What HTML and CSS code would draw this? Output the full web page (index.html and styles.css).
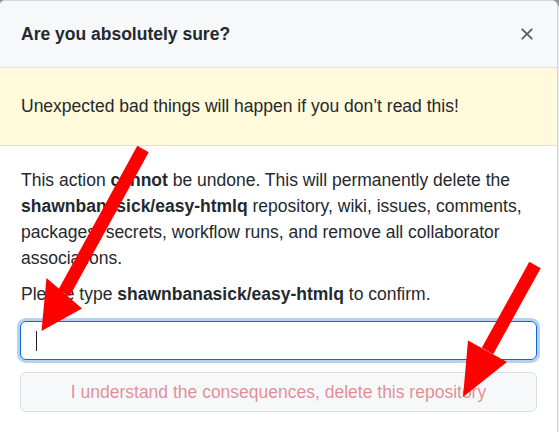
FILE: index.html
```html
<!DOCTYPE html>
<html lang="en">
<head>
<meta charset="utf-8">
<title>Delete repository</title>
<link rel="stylesheet" href="styles.css">
</head>
<body>
<div class="dialog">
  <div class="header">
    <h1 class="title">Are you absolutely sure?</h1>
    <button class="close" aria-label="Close">
      <svg width="20" height="20" viewBox="0 0 16 16"><path fill="#57606a" d="M3.72 3.72a.75.75 0 0 1 1.06 0L8 6.940l3.22-3.220a.749.749 0 0 1 1.275.326.749.749 0 0 1-.215.734L9.06 8l3.22 3.22a.749.749 0 0 1-.326 1.275.749.749 0 0 1-.734-.215L8 9.06l-3.22 3.22a.751.751 0 0 1-1.042-.018.751.751 0 0 1-.018-1.042L6.94 8 3.72 4.78a.75.75 0 0 1 0-1.06Z"/></svg>
    </button>
  </div>
  <div class="flash">Unexpected bad things will happen if you don’t read this!</div>
  <div class="body">
    <p class="para">This action <strong>cannot</strong> be undone. This will permanently delete the <strong>shawnbanasick/easy-htmlq</strong> repository, wiki, issues, comments, packages, secrets, workflow runs, and remove all collaborator associations.</p>
    <p class="para confirm">Please type <strong>shawnbanasick/easy-htmlq</strong> to confirm.</p>
    <div class="input"><span class="caret"></span></div>
    <button class="danger" disabled>I understand the consequences, delete this repository</button>
  </div>
</div>
<svg class="arrows" width="559" height="432" viewBox="0 0 559 432">
  <line x1="143" y1="149" x2="64" y2="293" stroke="#ff0000" stroke-width="13"/>
  <polygon points="46.5,278 82,308.5 41.5,331" fill="#ff0000"/>
  <line x1="535" y1="265" x2="487.5" y2="351" stroke="#ff0000" stroke-width="13"/>
  <polygon points="468,340.5 507,362 463,397" fill="#ff0000"/>
</svg>
</body>
</html>
```

FILE: styles.css
```css
html, body {
  margin: 0;
  padding: 0;
}
body {
  width: 559px;
  height: 432px;
  overflow: hidden;
  background: linear-gradient(#8c959f 0, #8c959f 6px, #eaeef2 6px);
  font-family: "Liberation Sans", Arial, sans-serif;
  color: #24292f;
  position: relative;
}
.dialog {
  margin-left: -1px;
  width: 557px;
  height: 450px;
  border: 1px solid #d0d7de;
  border-radius: 6px;
  background: #ffffff;
  overflow: hidden;
}
.header {
  height: 66px;
  background: #f6f8fa;
  display: flex;
  align-items: center;
  justify-content: space-between;
  padding: 0 20px 0 21px;
}
.title {
  margin: 0;
  font-size: 17.5px;
  font-weight: bold;
  line-height: 25px;
}
.close {
  border: 0;
  padding: 0;
  background: transparent;
  width: 20px;
  height: 20px;
  display: flex;
}
.flash {
  height: 77px;
  display: flex;
  align-items: center;
  padding: 0 20px 0 21px;
  background: #fffadb;
  border-top: 1px solid #ede3b0;
  border-bottom: 1px solid #ede3b0;
  font-size: 17.5px;
  line-height: 25px;
}
.body {
  padding: 21px 20px 0 21px;
  display: flex;
  flex-direction: column;
}
.para {
  margin: 0;
  font-size: 17.5px;
  line-height: 26px;
}
.confirm {
  margin-top: 10px;
}
.input {
  margin-top: 14px;
  height: 37px;
  border: 1px solid #0969da;
  border-radius: 6px;
  box-shadow: 0 0 0 3px rgba(9, 105, 218, 0.3);
  padding: 0 15px;
  display: flex;
  align-items: center;
  margin-left: -1px;
}
.caret {
  width: 1px;
  height: 20px;
  background: #1f2328;
}
.danger {
  margin-top: 12px;
  margin-left: -1px;
  height: 40px;
  border: 1px solid #d8dee4;
  border-radius: 6px;
  background: #f6f8fa;
  color: rgba(207, 34, 46, 0.5);
  font-family: "Liberation Sans", Arial, sans-serif;
  font-size: 17.5px;
  padding: 0 20px;
}
.arrows {
  position: absolute;
  left: 0;
  top: 0;
  pointer-events: none;
}
```
